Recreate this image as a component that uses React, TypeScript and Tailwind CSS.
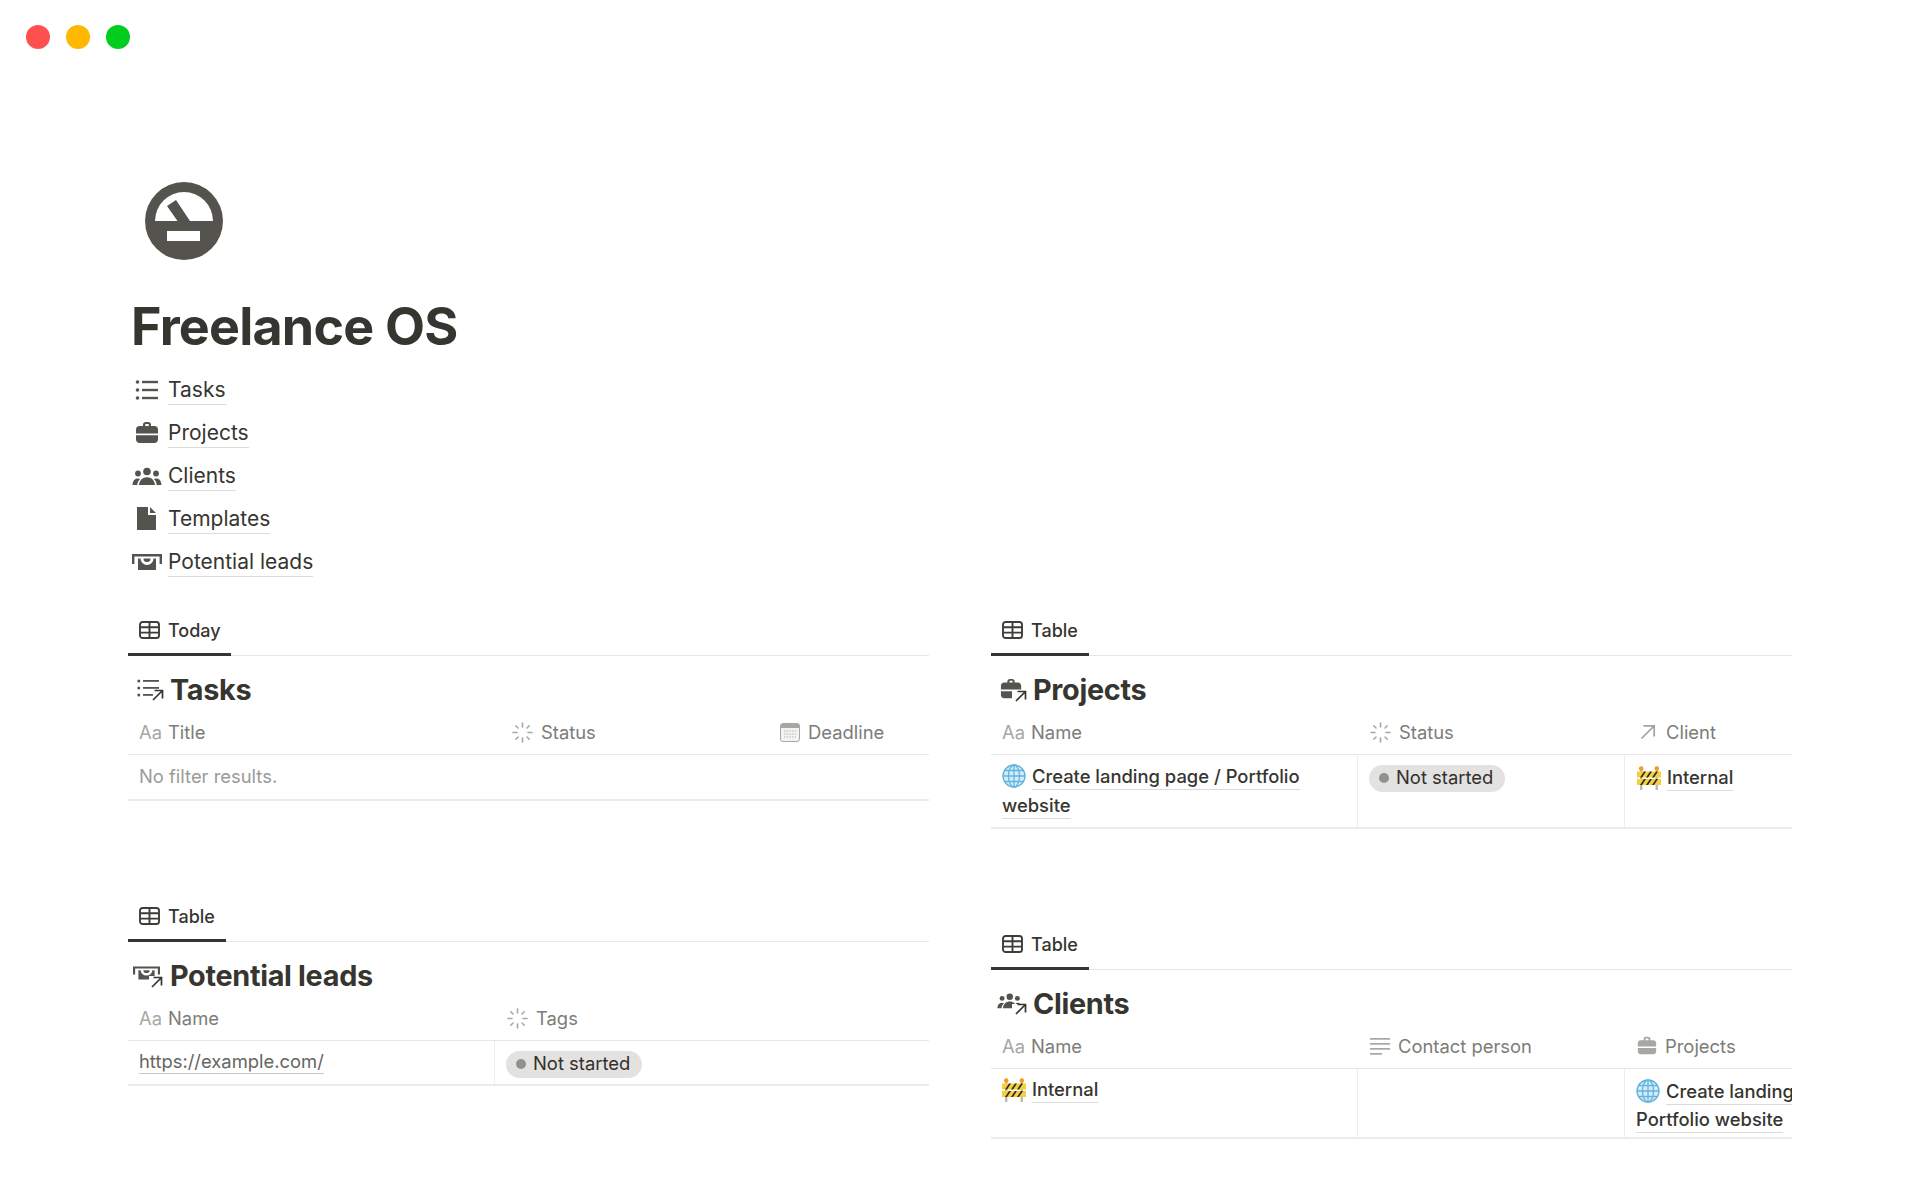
import React from 'react';

const Spinner = () => (
  <svg width="21" height="21" viewBox="0 0 21 21" fill="none" stroke="#a8a7a4" strokeWidth="1.6" strokeLinecap="round" className="shrink-0">
    <path d="M10.5 1v4M10.5 16v4M1 10.5h4M16 10.5h4M3.8 3.8l2.2 2.2M15 15l2.2 2.2M3.8 17.2L6 15M15 6l2.2-2.2" />
  </svg>
);

const TableIcon = () => (
  <svg width="21" height="18" viewBox="0 0 21 18" fill="none" stroke="#3f3d38" strokeWidth="1.9" className="shrink-0">
    <rect x="1" y="1" width="19" height="16" rx="2.6" />
    <path d="M1 6.3h19M1 11.6h19M10.5 1v16" />
  </svg>
);

const ListGlyph = ({ size = 24 }: { size?: number }) => (
  <svg width={size} height={size} viewBox="0 0 24 24" fill="#55534e">
    <circle cx="2.5" cy="4" r="1.8" />
    <circle cx="2.5" cy="12" r="1.8" />
    <circle cx="2.5" cy="20" r="1.8" />
    <rect x="7" y="2.8" width="16" height="2.4" />
    <rect x="7" y="10.8" width="16" height="2.4" />
    <rect x="7" y="18.8" width="16" height="2.4" />
  </svg>
);

const CasePaths = () => (
  <path
    fillRule="evenodd"
    d="M8 5V3.6C8 2 9.2 1 10.8 1h2.4C14.8 1 16 2 16 3.6V5h3.6C21.5 5 23 6.5 23 8.4v4.1H1V8.4C1 6.5 2.5 5 4.4 5H8zm2.2 0h3.6V3.8c0-.4-.3-.7-.7-.7h-2.2c-.4 0-.7.3-.7.7V5zM1 14.3h22v4.3c0 1.9-1.5 3.4-3.4 3.4H4.4C2.5 22 1 20.5 1 18.6v-4.3z"
  />
);

const PeoplePaths = () => (
  <>
    <circle cx="15" cy="5.5" r="3.8" />
    <circle cx="6" cy="7.5" r="2.9" />
    <circle cx="24" cy="7.5" r="2.9" />
    <path d="M7 19c.5-5 3.5-7.8 8-7.8s7.500 2.800 8 7.800H7zM.5 19c.2-3.800 2-6.500 5.300-6.500 1 0 1.700.2 2.400.6C6.500 14.500 5.600 16.500 5.300 19H.5zM29.500 19c-.2-3.800-2-6.500-5.300-6.500-1 0-1.700.2-2.400.6 1.700 1.400 2.600 3.400 2.900 5.900h4.800z" />
  </>
);

// top bar with side flaps, then a note with a half-ring cut out of its top edge
const MoneyPaths = () => (
  <>
    <path d="M0 2h30v10h-2.400V4.400H2.400V12H0V2z" />
    <path d="M6 6.500h2.500a6.500 6.500 0 0013 0H24V18H6V6.500z" />
    <path d="M11.500 6.500h7a3.500 3.500 0 01-7 0z" />
  </>
);

// small north-east arrow that sits on the corner of the heading icons
const CornerArrow = ({ x, y }: { x: number; y: number }) => (
  <path
    d={`M${x + 2} ${y + 11}L${x + 11} ${y + 2}M${x + 3.500} ${y + 1.500}H${x + 11.500}V${y + 9.500}`}
    fill="none"
    stroke="#37352f"
    strokeWidth="1.700"
  />
);

const Globe = () => (
  <svg width="24" height="24" viewBox="0 0 24 24" fill="none" className="inline-block align-[-5px] mr-[1px] shrink-0">
    <circle cx="12" cy="12" r="11.500" fill="#d5ecf8" />
    <g stroke="#62b3df" strokeWidth="1.300">
      <circle cx="12" cy="12" r="11" />
      <ellipse cx="12" cy="12" rx="5.500" ry="11" />
      <path d="M12 1v22M1 12h22M2.600 6.500h18.800M2.600 17.500h18.800" />
    </g>
  </svg>
);

const Barrier = () => (
  <svg width="24" height="24" viewBox="0 0 24 24" className="inline-block align-[-6px] mr-[1px] shrink-0">
    <rect x="3" y="3" width="2.400" height="21" fill="#b9b9b9" />
    <rect x="18.600" y="3" width="2.400" height="21" fill="#b9b9b9" />
    <circle cx="4.200" cy="2.500" r="2.300" fill="#f59a23" />
    <circle cx="19.800" cy="2.500" r="2.300" fill="#f59a23" />
    <rect x="0" y="5.500" width="24" height="6" fill="#f6cf3d" />
    <rect x="0" y="13" width="24" height="6" fill="#f6cf3d" />
    <path d="M3 11.500l4-6h2l-4 6zM9 11.500l4-6h2l-4 6zM15 11.500l4-6h2l-4 6zM3 19l4-6h2l-4 6zM9 19l4-6h2l-4 6zM15 19l4-6h2l-4 6z" fill="#2c2a25" />
  </svg>
);

const Calendar = () => (
  <svg width="20" height="19" viewBox="0 0 20 19" className="shrink-0">
    <rect x="0.500" y="0.500" width="19" height="18" rx="2.500" fill="#f3f3f2" stroke="#a8a7a4" />
    <path d="M0.500 3a2.500 2.500 0 012.500-2.500h14A2.500 2.500 0 0119.500 3v2h-19z" fill="#a8a7a4" />
    <path d="M4 8h12M4 11h12M4 14h12" stroke="#b8b7b4" strokeWidth="1.200" strokeDasharray="1.500 1.200" />
  </svg>
);

const NorthEast = () => (
  <div className="w-[21px] flex justify-center shrink-0">
    <svg width="16" height="16" viewBox="0 0 16 16" fill="none" stroke="#a3a29f" strokeWidth="1.700">
      <path d="M1.500 14.500L14 2M3.500 1.800h10.700v10.700" />
    </svg>
  </div>
);

const TextLines = () => (
  <svg width="20" height="17" viewBox="0 0 20 17" fill="#a8a7a4" className="shrink-0">
    <rect width="20" height="1.700" />
    <rect y="5" width="20" height="1.700" />
    <rect y="10" width="20" height="1.700" />
    <rect y="15" width="12" height="1.700" />
  </svg>
);

const GreyCase = () => (
  <svg width="20" height="20" viewBox="0 0 24 24" fill="#a8a7a4" className="shrink-0">
    <CasePaths />
  </svg>
);

const Aa = () => <span className="w-[21px] text-[#a8a7a4] shrink-0 -ml-[1px]">Aa</span>;

const Linked = ({ children }: { children: React.ReactNode }) => (
  <span className="border-b border-[#dcdbd9] pb-[2px]">{children}</span>
);

const Pill = () => (
  <span className="inline-flex items-center h-[27px] rounded-full bg-[#e3e2e0] pl-[10px] pr-[12px] gap-[7px] text-[#32302c]">
    <span className="w-[10px] h-[10px] rounded-full bg-[#91918e]" />
    Not started
  </span>
);

const NavLink = ({ icon, label }: { icon: React.ReactNode; label: string }) => (
  <div className="flex items-center h-[43px] text-[21px] text-[#37352f]">
    <div className="w-[32px] flex justify-center ml-[3px] mr-[5px]">{icon}</div>
    <span className="border-b border-[#dddcda] leading-[26px] pb-[1px] mt-[2px]">{label}</span>
  </div>
);

const HeadCell = ({ icon, label, className }: { icon: React.ReactNode; label: string; className: string }) => (
  <div className={`flex items-center gap-[8px] pl-[12px] shrink-0 ${className}`}>
    {icon}
    <span>{label}</span>
  </div>
);

const Block = ({
  tab,
  tabWidth,
  icon,
  title,
  head,
  children,
}: {
  tab: string;
  tabWidth: string;
  icon: React.ReactNode;
  title: string;
  head: React.ReactNode;
  children: React.ReactNode;
}) => (
  <div className="w-[801px] overflow-hidden">
    <div className="border-b border-[#e6e6e4] h-[49px]">
      <div className={`flex items-center gap-[8px] h-[49px] pl-[11px] border-b-[3px] border-[#37352f] text-[18px] font-medium text-[#37352f] ${tabWidth}`}>
        <TableIcon />
        {tab}
      </div>
    </div>
    <div className="flex items-center h-[55px] pt-[13px]">
      <div className="w-[42px] flex justify-end pr-[6px]">{icon}</div>
      <h2 className="text-[28.800px] font-bold tracking-[-0.3px] text-[#37352f]">{title}</h2>
    </div>
    <div className="flex items-center h-[44px] border-b border-[#e6e6e4] text-[18.400px] text-[#7d7c78]">{head}</div>
    {children}
  </div>
);

export default function App() {
  return (
    <div className="min-h-[1200px] bg-white font-['Inter','Liberation_Sans',sans-serif]">
      <div className="flex gap-[16px] pt-[25px] pl-[26px]">
        <div className="w-[24px] h-[24px] rounded-full bg-[#ff5050]" />
        <div className="w-[24px] h-[24px] rounded-full bg-[#ffb800]" />
        <div className="w-[24px] h-[24px] rounded-full bg-[#00cd1e]" />
      </div>

      <div className="pl-[128px] pr-[128px]">
        <div className="pl-[17px] pt-[133px]">
          <svg width="78" height="78" viewBox="0 0 78 78">
            <circle cx="39" cy="39" r="39" fill="#55534e" />
            <path d="M10 39a29 29 0 0158 0H45L31 18l-9 6 10.500 15H10z" fill="#fff" />
            <rect x="22" y="49" width="33" height="10" fill="#fff" />
          </svg>
        </div>
        <h1 className="text-[52px] leading-[60px] font-bold tracking-[-0.8px] text-[#37352f] pl-[3px] mt-[37px]">Freelance OS</h1>

        <div className="mt-[11px]">
          <NavLink icon={<ListGlyph />} label="Tasks" />
          <NavLink
            icon={
              <svg width="24" height="24" viewBox="0 0 24 24" fill="#55534e">
                <CasePaths />
              </svg>
            }
            label="Projects"
          />
          <NavLink
            icon={
              <svg width="30" height="20" viewBox="0 0 30 20" fill="#55534e">
                <PeoplePaths />
              </svg>
            }
            label="Clients"
          />
          <NavLink
            icon={
              <svg width="20" height="23" viewBox="0 0 20 23" fill="#55534e">
                <path d="M0 0h11v8h8v15H0V0zM13 0l6 6h-6V0z" />
              </svg>
            }
            label="Templates"
          />
          <NavLink
            icon={
              <svg width="30" height="20" viewBox="0 0 30 20" fill="#55534e">
                <MoneyPaths />
              </svg>
            }
            label="Potential leads"
          />
        </div>

        <div className="flex gap-[62px] mt-[24px]">
          <div className="flex flex-col gap-[92px]">
            <Block
              tab="Today"
              tabWidth="w-[103px]"
              title="Tasks"
              icon={
                <svg width="27" height="24" viewBox="0 0 27 24" fill="#55534e">
                  <circle cx="1.800" cy="3" r="1.500" />
                  <circle cx="1.800" cy="10" r="1.500" />
                  <circle cx="1.800" cy="17" r="1.500" />
                  <rect x="6" y="2" width="16" height="1.800" />
                  <rect x="6" y="9" width="16" height="1.800" />
                  <rect x="6" y="16" width="10" height="1.800" />
                  <CornerArrow x={14} y={11} />
                </svg>
              }
              head={
                <>
                  <HeadCell icon={<Aa />} label="Title" className="w-[372px]" />
                  <HeadCell icon={<Spinner />} label="Status" className="w-[268px]" />
                  <HeadCell icon={<Calendar />} label="Deadline" className="w-[161px]" />
                </>
              }
            >
              <div className="flex items-center h-[46px] pl-[11px] border-b-2 border-[#ebebea] text-[18.400px] text-[#9b9a97]">
                No filter results.
              </div>
            </Block>

            <Block
              tab="Table"
              tabWidth="w-[98px]"
              title="Potential leads"
              icon={
                <svg width="31" height="24" viewBox="0 0 31 24" fill="#55534e">
                  <g transform="translate(0 1) scale(0.9 0.8)">
                    <MoneyPaths />
                  </g>
                  <path d="M16 12h15v12H16z" fill="#fff" />
                  <CornerArrow x={17} y={12} />
                </svg>
              }
              head={
                <>
                  <HeadCell icon={<Aa />} label="Name" className="w-[367px]" />
                  <HeadCell icon={<Spinner />} label="Tags" className="w-[434px]" />
                </>
              }
            >
              <div className="flex h-[45px] border-b-2 border-[#ebebea] text-[18.400px]">
                <div className="w-[367px] shrink-0 pl-[11px] pt-[7px] border-r border-[#ececeb] text-[#676661]">
                  <span className="border-b border-[#c9c8c5] pb-[1px]">https://example.com/</span>
                </div>
                <div className="pl-[11px] pt-[8px]">
                  <Pill />
                </div>
              </div>
            </Block>
          </div>

          <div className="flex flex-col gap-[92px]">
            <Block
              tab="Table"
              tabWidth="w-[98px]"
              title="Projects"
              icon={
                <svg width="27" height="25" viewBox="0 0 27 25" fill="#55534e">
                  <g transform="scale(0.92)">
                    <CasePaths />
                  </g>
                  <path d="M12 13h15v12H12z" fill="#fff" />
                  <CornerArrow x={14} y={12} />
                </svg>
              }
              head={
                <>
                  <HeadCell icon={<Aa />} label="Name" className="w-[367px]" />
                  <HeadCell icon={<Spinner />} label="Status" className="w-[267px]" />
                  <HeadCell icon={<NorthEast />} label="Client" className="w-[167px]" />
                </>
              }
            >
              <div className="flex h-[74px] border-b-2 border-[#ebebea] text-[18.400px] text-[#37352f] font-medium">
                <div className="w-[367px] shrink-0 pl-[11px] pr-[40px] pt-[7px] leading-[29px] border-r border-[#ececeb]">
                  <Globe /> <Linked>Create landing page / Portfolio website</Linked>
                </div>
                <div className="w-[267px] shrink-0 pl-[11px] pt-[8px] border-r border-[#ececeb] font-normal">
                  <Pill />
                </div>
                <div className="pl-[12px] pt-[8px] leading-[29px]">
                  <Barrier /> <Linked>Internal</Linked>
                </div>
              </div>
            </Block>

            <Block
              tab="Table"
              tabWidth="w-[98px]"
              title="Clients"
              icon={
                <svg width="30" height="24" viewBox="0 0 30 24" fill="#55534e">
                  <g transform="scale(0.85)">
                    <PeoplePaths />
                  </g>
                  <path d="M15 12h15v12H15z" fill="#fff" />
                  <CornerArrow x={17} y={11} />
                </svg>
              }
              head={
                <>
                  <HeadCell icon={<Aa />} label="Name" className="w-[367px]" />
                  <HeadCell icon={<TextLines />} label="Contact person" className="w-[267px]" />
                  <HeadCell icon={<GreyCase />} label="Projects" className="w-[167px]" />
                </>
              }
            >
              <div className="flex h-[70px] border-b-2 border-[#ebebea] text-[18.400px] text-[#37352f] font-medium">
                <div className="w-[367px] shrink-0 pl-[11px] pt-[6px] leading-[29px] border-r border-[#ececeb]">
                  <Barrier /> <Linked>Internal</Linked>
                </div>
                <div className="w-[267px] shrink-0 border-r border-[#ececeb]" />
                <div className="w-[267px] shrink-0 pl-[11px] pr-[12px] pt-[8px] leading-[28px]">
                  <Globe /> <Linked>Create landing page / Portfolio website</Linked>
                </div>
              </div>
            </Block>
          </div>
        </div>
      </div>
    </div>
  );
}
